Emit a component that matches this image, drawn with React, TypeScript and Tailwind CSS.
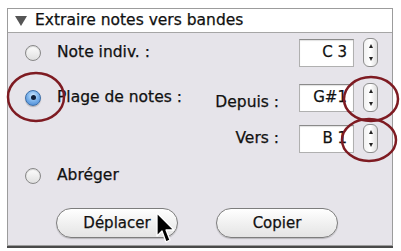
import React from 'react';

const font = { fontFamily: '"DejaVu Sans", "Liberation Sans", sans-serif' };

const Radio = ({ checked }: { checked?: boolean }) =>
  checked ? (
    <span className="w-[16px] h-[16px] rounded-full border border-[#3c6ea8] bg-[radial-gradient(circle_at_50%_35%,#d6ecff_0%,#7fb5ec_45%,#3d7fd0_100%)] flex items-center justify-center shadow-[0_1px_1px_rgba(0,0,0,0.25)]">
      <span className="w-[5px] h-[5px] rounded-full bg-[#10203a]" />
    </span>
  ) : (
    <span className="w-[16px] h-[16px] rounded-full border-[1.5px] border-[#888] bg-[linear-gradient(#fdfdfd,#e0e0e0)] shadow-[inset_0_1px_1px_rgba(0,0,0,0.15)]" />
  );

const Stepper = () => (
  <div className="w-[15px] h-[29px] rounded-[6px] border border-[#8e8e8e] bg-[linear-gradient(90deg,#f2f2f2,#ffffff_50%,#dedede)] flex flex-col items-center justify-between py-[5px]">
    <span className="w-0 h-0 border-l-[2.5px] border-r-[2.5px] border-b-[4px] border-l-transparent border-r-transparent border-b-[#222]" />
    <span className="w-0 h-0 border-l-[2.5px] border-r-[2.5px] border-t-[4px] border-l-transparent border-r-transparent border-t-[#222]" />
  </div>
);

const Field = ({ value }: { value: string }) => (
  <div className="flex items-center gap-[9px]">
    <div className="w-[55px] h-[28px] bg-white border border-[#b0b0b0] border-t-[#8a8a8a] shadow-[inset_0_1px_1px_rgba(0,0,0,0.12)] flex items-center justify-end pr-[6px] text-[15px] text-[#111]">
      {value}
    </div>
    <Stepper />
  </div>
);

const PillButton = ({ label }: { label: string }) => (
  <button className="w-[122px] h-[30px] rounded-full border border-[#7d7d7d] bg-[linear-gradient(#ffffff,#f1f1f1_50%,#e4e4e4)] shadow-[0_1px_1px_rgba(0,0,0,0.2)] text-[15px] text-[#111] flex items-center justify-center">
    {label}
  </button>
);

export default function App() {
  return (
    <div className="relative w-[401px] h-[251px] bg-white overflow-hidden pt-[8px] pl-[7px] [-webkit-text-stroke:0.25px_#111]" style={font}>
      <div className="w-[386px] h-[238px] border border-[#9c9c9c] bg-[#e6e4ea] shadow-[0_2px_0_#4a4a4a] flex flex-col">
        {/* header */}
        <div className="h-[24px] bg-white border-b border-[#a6a6a6] flex items-center pl-[7px] gap-[8px] text-[15.5px] text-[#111]">
          <span className="w-0 h-0 border-l-[6px] border-r-[6px] border-t-[10px] border-l-transparent border-r-transparent border-t-[#555]" />
          <span>Extraire notes vers bandes</span>
        </div>

        {/* body */}
        <div className="flex flex-col pl-[17px] pr-[14px] text-[15.5px] text-[#111]">
          <div className="mt-[5px] h-[29px] flex items-center">
            <div className="flex items-center gap-[16px] flex-1">
              <Radio />
              <span>Note indiv. :</span>
            </div>
            <Field value="C 3" />
          </div>

          <div className="mt-[16px] h-[29px] flex items-center">
            <div className="flex items-center gap-[16px] flex-1">
              <Radio checked />
              <span>Plage de notes :</span>
            </div>
            <span className="mr-[20px] mt-[10px]">Depuis :</span>
            <Field value="G#1" />
          </div>

          <div className="mt-[12px] h-[29px] flex items-center justify-end">
            <span className="mr-[20px]">Vers :</span>
            <Field value="B 1" />
          </div>

          <div className="mt-[11px] flex items-center gap-[16px]">
            <Radio />
            <span>Abréger</span>
          </div>

          <div className="mt-[21px] flex items-center gap-[38px] pl-[31px]">
            <PillButton label="Déplacer" />
            <PillButton label="Copier" />
          </div>
        </div>
      </div>

      {/* annotations and cursor */}
      <svg className="absolute inset-0 pointer-events-none" width="401" height="251" viewBox="0 0 401 251">
        <ellipse cx="36" cy="97" rx="28" ry="24" fill="none" stroke="#7e1b22" strokeWidth="2.5" />
        <ellipse cx="371" cy="99" rx="27" ry="22" fill="none" stroke="#7e1b22" strokeWidth="2.5" />
        <ellipse cx="369" cy="140" rx="27" ry="21" fill="none" stroke="#7e1b22" strokeWidth="2.5" />
        <path d="M157 213 L157 236 L162 231 L166 242 L170 240 L166 230 L174 230 Z" fill="#000" stroke="#fff" strokeWidth="1.3" strokeLinejoin="round" />
      </svg>
    </div>
  );
}
